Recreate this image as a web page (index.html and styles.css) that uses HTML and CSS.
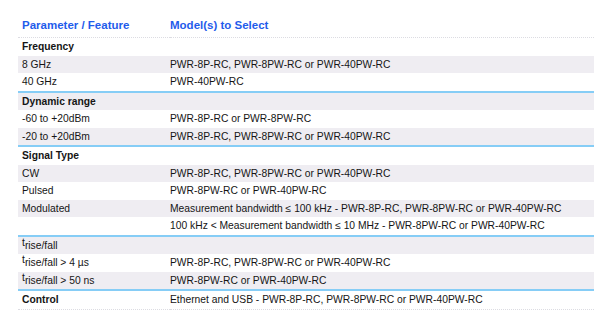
FILE: index.html
```html
<!DOCTYPE html>
<html>
<head>
<meta charset="utf-8">
<link rel="stylesheet" href="styles.css">
</head>
<body>
<table class="spec">
  <thead>
    <tr><th class="c1">Parameter / Feature</th><th class="c2">Model(s) to Select</th></tr>
  </thead>
  <tbody>
    <tr class="sec"><td>Frequency</td><td></td></tr>
    <tr><td>8 GHz</td><td>PWR-8P-RC, PWR-8PW-RC or PWR-40PW-RC</td></tr>
    <tr><td>40 GHz</td><td>PWR-40PW-RC</td></tr>
    <tr class="sec grp"><td>Dynamic range</td><td></td></tr>
    <tr><td>-60 to +20dBm</td><td>PWR-8P-RC or PWR-8PW-RC</td></tr>
    <tr><td>-20 to +20dBm</td><td>PWR-8P-RC, PWR-8PW-RC or PWR-40PW-RC</td></tr>
    <tr class="sec grp"><td>Signal Type</td><td></td></tr>
    <tr><td>CW</td><td>PWR-8P-RC, PWR-8PW-RC or PWR-40PW-RC</td></tr>
    <tr><td>Pulsed</td><td>PWR-8PW-RC or PWR-40PW-RC</td></tr>
    <tr><td>Modulated</td><td>Measurement bandwidth ≤ 100 kHz - PWR-8P-RC, PWR-8PW-RC or PWR-40PW-RC</td></tr>
    <tr><td></td><td>100 kHz &lt; Measurement bandwidth ≤ 10 MHz - PWR-8PW-RC or PWR-40PW-RC</td></tr>
    <tr class="grp"><td><span class="t">t</span>rise/fall</td><td></td></tr>
    <tr><td><span class="t">t</span>rise/fall &gt; 4 µs</td><td>PWR-8P-RC, PWR-8PW-RC or PWR-40PW-RC</td></tr>
    <tr><td><span class="t">t</span>rise/fall &gt; 50 ns</td><td>PWR-8PW-RC or PWR-40PW-RC</td></tr>
    <tr class="sec grp last"><td>Control</td><td class="norm">Ethernet and USB - PWR-8P-RC, PWR-8PW-RC or PWR-40PW-RC</td></tr>
  </tbody>
</table>
</body>
</html>
```
FILE: styles.css
```css
html, body {
  margin: 0;
  padding: 0;
  background: #ffffff;
}
body {
  padding: 12px 18px 0 18px;
  font-family: "Liberation Sans", Arial, sans-serif;
  color: #151515;
}
.spec {
  width: 576px;
  border-collapse: collapse;
  table-layout: fixed;
}
.spec th {
  text-align: left;
  color: #1f5ceb;
  font-size: 11.5px;
  font-weight: bold;
  height: 25px;
  padding: 0 0 0 4px;
  vertical-align: middle;
  border-bottom: 1px dotted #dcdce2;
}
.spec th.c1 { width: 148px; }
.spec th.c2 { padding-left: 0; }
.spec td {
  font-size: 10.3px;
  line-height: 12px;
  height: 16.5px;
  padding: 1px 0 0 4px;
  vertical-align: middle;
  white-space: nowrap;
}
.spec td + td {
  padding-left: 0;
}
.spec tbody tr:nth-child(even) td {
  background: #efedf2;
}
.spec tr.sec td:first-child {
  font-weight: bold;
}
.spec tr.grp td {
  border-top: 2px solid #86cdf6;
}
.spec tr.last td {
  border-bottom: 1px dotted #dcdce2;
}
.spec td.norm {
  font-weight: normal;
}
.t {
  position: relative;
  top: -3px;
}
```
